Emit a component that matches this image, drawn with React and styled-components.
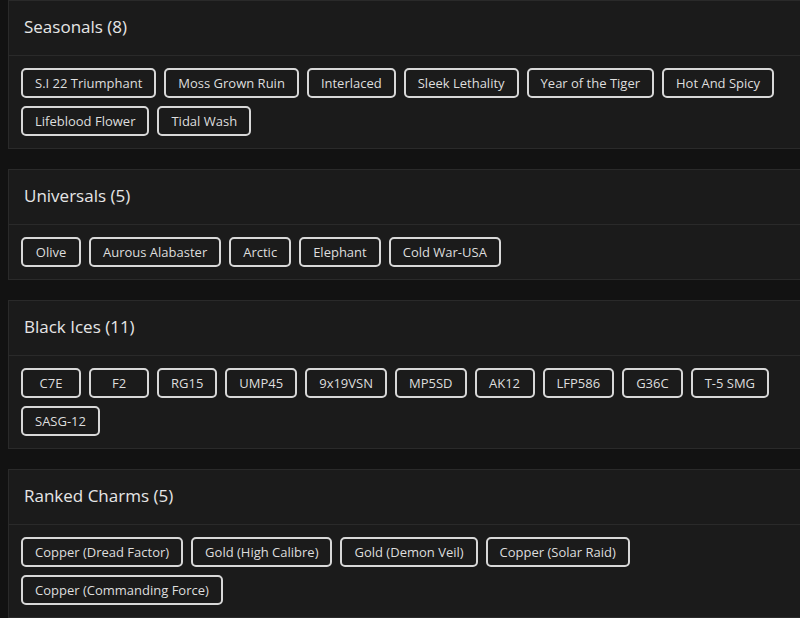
import React from "react";
import styled, { createGlobalStyle } from "styled-components";

const GlobalStyle = createGlobalStyle`
  html, body {
    margin: 0;
    padding: 0;
    background-color: #121212;
    overflow: hidden;
  }
  body {
    font-family: "Open Sans", "Liberation Sans", sans-serif;
  }
`;

const Page = styled.div`
  display: flex;
  flex-direction: column;
  gap: 20px;
  padding-left: 8px;
  width: 830px;
`;

const Card = styled.section`
  width: 810px;
  box-sizing: border-box;
  background-color: #1b1b1b;
  border: 1px solid #2a2a2a;
`;

const CardHeader = styled.div`
  height: 55px;
  display: flex;
  align-items: center;
  padding: 0 15px 2px;
  box-sizing: border-box;
  border-bottom: 1px solid #2a2a2a;
`;

const Title = styled.h2`
  margin: 0;
  font-size: 17px;
  line-height: 20px;
  font-weight: 500;
  color: #e6e6e6;
`;

const ChipList = styled.div`
  display: flex;
  flex-wrap: wrap;
  gap: 8px;
  padding: 12px;
`;

const Chip = styled.button`
  height: 30px;
  min-width: 60px;
  box-sizing: border-box;
  display: inline-flex;
  align-items: center;
  justify-content: center;
  padding: 0 12px;
  background-color: #1b1b1b;
  border: 2px solid #d8d8d8;
  border-radius: 5px;
  color: #dedede;
  font-family: inherit;
  font-size: 13px;
  white-space: nowrap;
  cursor: pointer;
`;

const sections = [
  {
    title: "Seasonals (8)",
    items: [
      "S.I 22 Triumphant",
      "Moss Grown Ruin",
      "Interlaced",
      "Sleek Lethality",
      "Year of the Tiger",
      "Hot And Spicy",
      "Lifeblood Flower",
      "Tidal Wash",
    ],
  },
  {
    title: "Universals (5)",
    items: ["Olive", "Aurous Alabaster", "Arctic", "Elephant", "Cold War-USA"],
  },
  {
    title: "Black Ices (11)",
    items: [
      "C7E",
      "F2",
      "RG15",
      "UMP45",
      "9x19VSN",
      "MP5SD",
      "AK12",
      "LFP586",
      "G36C",
      "T-5 SMG",
      "SASG-12",
    ],
  },
  {
    title: "Ranked Charms (5)",
    items: [
      "Copper (Dread Factor)",
      "Gold (High Calibre)",
      "Gold (Demon Veil)",
      "Copper (Solar Raid)",
      "Copper (Commanding Force)",
    ],
  },
];

function App() {
  return (
    <>
      <GlobalStyle />
      <Page>
        {sections.map((s) => (
          <Card key={s.title}>
            <CardHeader>
              <Title>{s.title}</Title>
            </CardHeader>
            <ChipList>
              {s.items.map((item) => (
                <Chip key={item}>{item}</Chip>
              ))}
            </ChipList>
          </Card>
        ))}
      </Page>
    </>
  );
}

export default App;
